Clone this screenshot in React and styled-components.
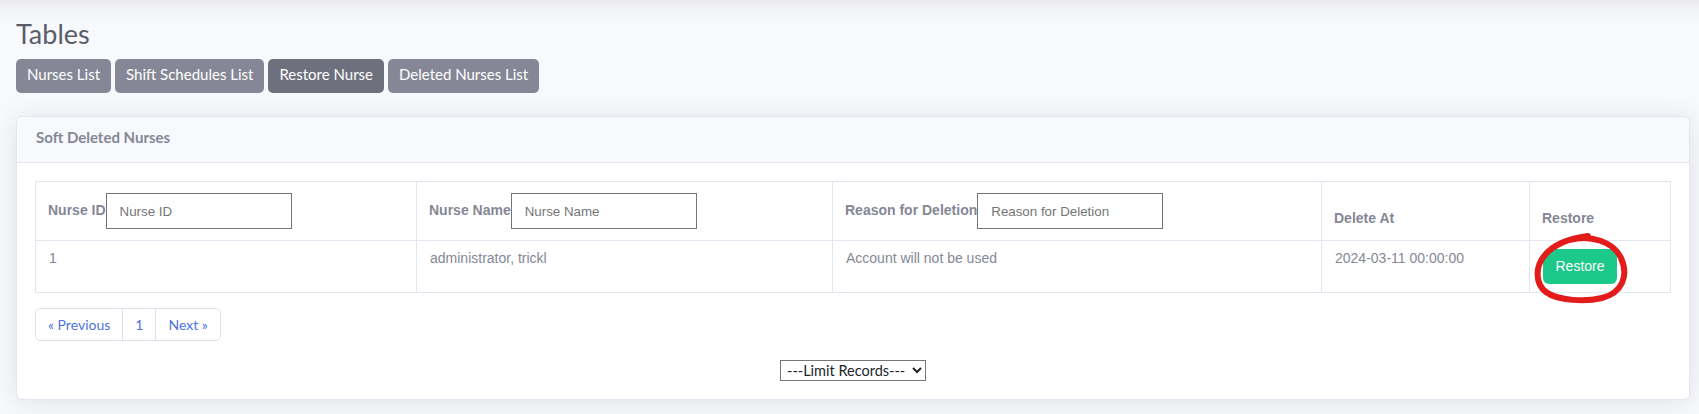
import React from 'react';
import styled, { createGlobalStyle } from 'styled-components';

const GlobalStyle = createGlobalStyle`
  html, body { margin: 0; padding: 0; }
  body {
    background-color: #f8f9fc;
    background-image: linear-gradient(to bottom, #ebebef 0px, #f2f3f7 10px, #f8f9fc 26px);
    background-repeat: no-repeat;
    font-family: Lato, "Open Sans", sans-serif;
    color: #858796;
  }
`;

const Page = styled.div`
  padding: 18px 9px 15px 16px;
`;

const Title = styled.h1`
  margin: 0 0 9px;
  font-family: Lato, "Open Sans", sans-serif;
  font-weight: 400;
  font-size: 27px;
  line-height: 1.2;
  color: #5a5c69;
`;

const NavBar = styled.div`
  display: flex;
  gap: 4px;
`;

const NavButton = styled.button`
  height: 34px;
  padding: 0 11px 4px;
  border: none;
  border-radius: 5px;
  background: ${(p) => (p.$active ? '#6e707e' : '#858796')};
  color: #fff;
  font-family: Lato, "Open Sans", sans-serif;
  font-size: 15px;
  line-height: 30px;
  cursor: pointer;
`;

const Card = styled.div`
  margin-top: 23px;
  background: #fff;
  border: 1px solid #e3e6f0;
  border-radius: 6px;
  box-shadow: 0 2px 24px rgba(58, 59, 69, 0.12);
`;

const CardHeader = styled.div`
  background: #f8f9fc;
  border-bottom: 1px solid #e3e6f0;
  border-radius: 6px 6px 0 0;
  padding: 10px 19px 14px;
  font-family: Lato, "Open Sans", sans-serif;
  font-weight: 700;
  font-size: 15px;
  line-height: 21px;
  color: #858796;
`;

const CardBody = styled.div`
  padding: 18px;
`;

const Table = styled.table`
  width: 100%;
  border-collapse: collapse;
  table-layout: fixed;
  font-family: "Liberation Sans", Arial, sans-serif;
  font-size: 14px;
  color: #858796;
`;

const Col = styled.col`
  width: ${(p) => (p.$w ? `${p.$w}px` : 'auto')};
`;

const Th = styled.th`
  border: 1px solid #e3e6f0;
  padding: 11px 12px;
  vertical-align: bottom;
  text-align: left;
  font-weight: 700;
  line-height: 21px;
  white-space: nowrap;
`;

const Td = styled.td`
  border: 1px solid #e3e6f0;
  padding: 8px 13px;
  vertical-align: top;
  line-height: 18px;
`;

const FilterInput = styled.input`
  width: 186px;
  height: 36px;
  box-sizing: border-box;
  margin: 0;
  padding: 0 13px;
  border: 1px solid #767676;
  border-radius: 0;
  font-family: "Liberation Sans", Arial, sans-serif;
  font-size: 13.33px;
  font-weight: 400;
  vertical-align: middle;
  color: #333;
  &::placeholder { color: #757575; }
`;

const Marked = styled.span`
  position: relative;
  display: inline-block;
  vertical-align: top;
`;

const RestoreButton = styled.button`
  display: inline-block;
  height: 35px;
  padding: 0 12.5px;
  border: none;
  border-radius: 6px;
  background: #1cc88a;
  color: #fff;
  font-family: "Liberation Sans", Arial, sans-serif;
  font-size: 14px;
  line-height: 35px;
  vertical-align: top;
  cursor: pointer;
`;

const Scribble = styled.svg`
  position: absolute;
  left: -13px;
  top: -19px;
  width: 104px;
  height: 80px;
  overflow: visible;
  pointer-events: none;
`;

const Pagination = styled.ul`
  display: flex;
  list-style: none;
  margin: 15px 0 19px;
  padding: 0;
`;

const PageLink = styled.li`
  padding: 6px 12px;
  line-height: 19px;
  border: 1px solid #dddfeb;
  margin-left: -1px;
  background: #fff;
  color: #4e73df;
  font-family: Lato, "Open Sans", sans-serif;
  font-size: 14px;
  cursor: pointer;
  &:first-child { margin-left: 0; border-radius: 5px 0 0 5px; }
  &:last-child { border-radius: 0 5px 5px 0; }
`;

const SelectRow = styled.div`
  display: flex;
  justify-content: center;
`;

const LimitSelect = styled.select`
  width: 146px;
  height: 21px;
  margin: 0;
  padding: 0 0 0 2px;
  border: 1px solid #767676;
  border-radius: 0;
  background: #fff;
  color: #212529;
  font-family: Lato, "Open Sans", sans-serif;
  font-size: 14.5px;
`;

const columns = [
  { label: 'Nurse ID', filter: 'Nurse ID', w: 381 },
  { label: 'Nurse Name', filter: 'Nurse Name', w: 416 },
  { label: 'Reason for Deletion', filter: 'Reason for Deletion', w: 489 },
  { label: 'Delete At', w: 208 },
  { label: 'Restore' },
];

const rows = [
  {
    id: '1',
    name: 'administrator, trickl',
    reason: 'Account will not be used',
    deletedAt: '2024-03-11 00:00:00',
  },
];

export default function App() {
  return (
    <>
      <GlobalStyle />
      <Page>
        <Title>Tables</Title>
        <NavBar>
          <NavButton>Nurses List</NavButton>
          <NavButton>Shift Schedules List</NavButton>
          <NavButton $active>Restore Nurse</NavButton>
          <NavButton>Deleted Nurses List</NavButton>
        </NavBar>
        <Card>
          <CardHeader>Soft Deleted Nurses</CardHeader>
          <CardBody>
            <Table>
              <colgroup>
                {columns.map((c) => (
                  <Col key={c.label} $w={c.w} />
                ))}
              </colgroup>
              <thead>
                <tr>
                  {columns.map((c) => (
                    <Th key={c.label}>
                      {c.label}
                      {c.filter && <FilterInput placeholder={c.filter} />}
                    </Th>
                  ))}
                </tr>
              </thead>
              <tbody>
                {rows.map((r) => (
                  <tr key={r.id}>
                    <Td>{r.id}</Td>
                    <Td>{r.name}</Td>
                    <Td>{r.reason}</Td>
                    <Td>{r.deletedAt}</Td>
                    <Td>
                      <Marked>
                        <RestoreButton>Restore</RestoreButton>
                        <Scribble viewBox="0 0 104 80">
                          <path
                            d="M 40 10 C 60 4, 84 12, 91 28 C 99 46, 92 63, 72 68 C 56 72, 28 71, 16 62 C 5 54, 5 36, 15 25 C 25 13, 42 8, 58 6"
                            fill="none"
                            stroke="#e31b1b"
                            strokeWidth="6"
                            strokeLinecap="round"
                            strokeLinejoin="round"
                          />
                        </Scribble>
                      </Marked>
                    </Td>
                  </tr>
                ))}
              </tbody>
            </Table>
            <Pagination>
              <PageLink>« Previous</PageLink>
              <PageLink>1</PageLink>
              <PageLink>Next »</PageLink>
            </Pagination>
            <SelectRow>
              <LimitSelect defaultValue="">
                <option value="">---Limit Records---</option>
                <option value="10">10</option>
                <option value="25">25</option>
                <option value="50">50</option>
              </LimitSelect>
            </SelectRow>
          </CardBody>
        </Card>
      </Page>
    </>
  );
}
